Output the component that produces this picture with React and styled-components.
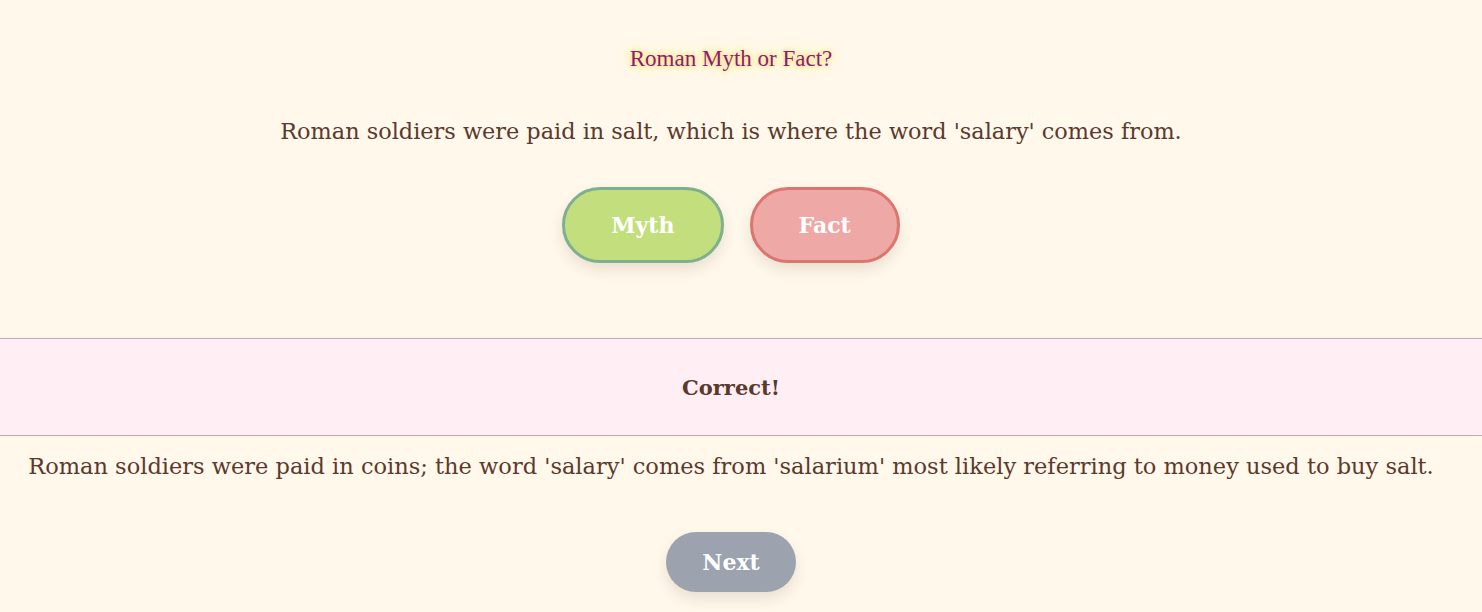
import React, { useState } from 'react';
import styled, { createGlobalStyle } from 'styled-components';

const GlobalStyle = createGlobalStyle`
  html, body {
    margin: 0;
    padding: 0;
    background: #fff8eb;
  }
  * { box-sizing: border-box; }
`;

const Page = styled.div`
  min-height: 100vh;
  background: #fff8eb;
  color: #5b3a2e;
  font-family: "DejaVu Serif", "Liberation Serif", serif;
  display: flex;
  flex-direction: column;
  align-items: stretch;
`;

const Quiz = styled.section`
  display: flex;
  flex-direction: column;
  align-items: center;
  padding: 44px 20px 75px 0;
`;

const Title = styled.h1`
  margin: 0;
  font-family: "Liberation Serif", serif;
  font-weight: 400;
  font-size: 23px;
  line-height: 30px;
  color: #8a1c7c;
  text-shadow: 0 0 4px #ffe066, 0 0 10px #ffe680, 0 0 16px #fff0a8;
`;

const Question = styled.p`
  margin: 41px 0 0;
  font-size: 22.4px;
  line-height: 32px;
  text-align: center;
  white-space: nowrap;
`;

const Choices = styled.div`
  display: flex;
  gap: 26px;
  margin-top: 40px;
`;

const Pill = styled.button`
  height: ${p => p.$h || 76}px;
  padding: 0 ${p => p.$pad || 46}px;
  border-radius: 999px;
  border: ${p => (p.$border ? `3px solid ${p.$border}` : 'none')};
  background: ${p => p.$bg};
  color: #fff;
  font-family: "DejaVu Serif", serif;
  font-weight: 700;
  font-size: 22px;
  cursor: pointer;
  box-shadow: 0 7px 14px rgba(90, 70, 40, 0.13);
`;

const Feedback = styled.div`
  height: 98px;
  background: #ffeff5;
  border-top: 1px solid #c9a0cc;
  border-bottom: 1px solid #c4a7b4;
  display: flex;
  align-items: center;
  justify-content: center;
  padding-right: 20px;
`;

const Verdict = styled.strong`
  font-size: 21px;
  font-weight: 700;
  color: #5b3a2e;
`;

const Explanation = styled.p`
  margin: 14px 0 0;
  padding: 0 20px 0 0;
  font-size: 22.5px;
  line-height: 32px;
  text-align: center;
  white-space: nowrap;
`;

const Footer = styled.div`
  display: flex;
  justify-content: center;
  margin-top: 50px;
  padding-right: 20px;
`;

export default function App() {
  const [answer, setAnswer] = useState('myth');

  return (
    <Page>
      <GlobalStyle />
      <Quiz>
        <Title>Roman Myth or Fact?</Title>
        <Question>
          Roman soldiers were paid in salt, which is where the word 'salary' comes from.
        </Question>
        <Choices>
          <Pill $bg="#c3df7d" $border="#7faf8f" $pad={46} onClick={() => setAnswer('myth')}>
            Myth
          </Pill>
          <Pill $bg="#eea8a5" $border="#dc7570" $pad={46} onClick={() => setAnswer('fact')}>
            Fact
          </Pill>
        </Choices>
      </Quiz>
      <Feedback>
        <Verdict>{answer === 'myth' ? 'Correct!' : 'Wrong!'}</Verdict>
      </Feedback>
      <Explanation>
        Roman soldiers were paid in coins; the word 'salary' comes from 'salarium' most likely referring to money used to buy salt.
      </Explanation>
      <Footer>
        <Pill $bg="#9ca3af" $h={60} $pad={36}>Next</Pill>
      </Footer>
    </Page>
  );
}
